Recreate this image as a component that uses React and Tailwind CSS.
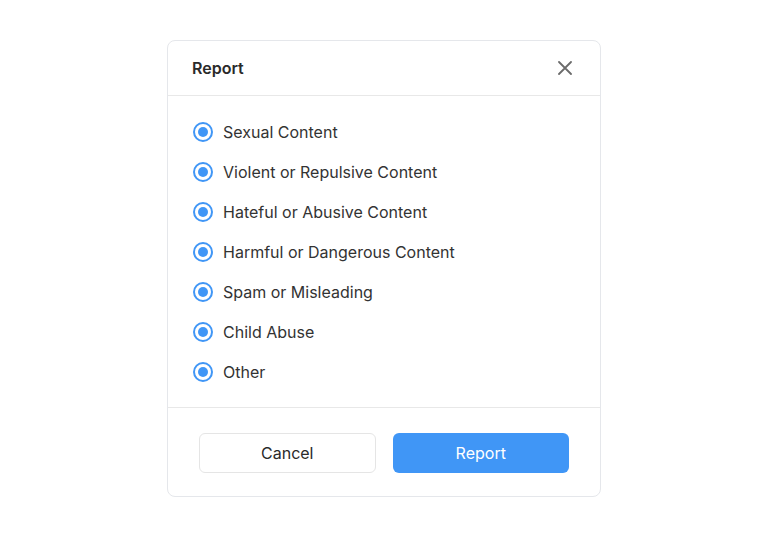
import React from "react";

const options = [
  "Sexual Content",
  "Violent or Repulsive Content",
  "Hateful or Abusive Content",
  "Harmful or Dangerous Content",
  "Spam or Misleading",
  "Child Abuse",
  "Other",
];

export default function App() {
  return (
    <div
      className="min-h-screen w-full bg-white flex items-center justify-center"
      style={{ fontFamily: "Inter, 'Noto Sans', sans-serif" }}
    >
      <div className="w-[434px] rounded-lg border border-[#e5e7eb] bg-white">
        <div className="h-[55px] flex items-center justify-between px-6 border-b border-[#e8e8e8]">
          <span className="text-[16px] font-semibold text-[#2a2a2a]">Report</span>
          <svg width="14" height="14" viewBox="0 0 14 14" className="mr-1">
            <path d="M1 1L13 13M13 1L1 13" stroke="#6b6b6b" strokeWidth="1.8" strokeLinecap="round" />
          </svg>
        </div>
        <div className="pl-[25px] pr-6 pt-4 pb-[15px]">
          {options.map((o) => (
            <label key={o} className="h-10 flex items-center gap-2.5">
              <span className="w-5 h-5 rounded-full border-2 border-[#4096f6] flex items-center justify-center">
                <span className="w-2.5 h-2.5 rounded-full bg-[#4096f6]" />
              </span>
              <span className="text-[16px] text-[#333333]">{o}</span>
            </label>
          ))}
        </div>
        <div className="border-t border-[#e8e8e8] px-[31px] pt-[25px] pb-[23px] grid grid-cols-2 gap-[17px]">
          <button className="h-10 rounded-md border border-[#e5e5e5] bg-white text-[16px] text-[#2a2a2a]">
            Cancel
          </button>
          <button className="h-10 rounded-md bg-[#4096f6] text-[16px] text-white">
            Report
          </button>
        </div>
      </div>
    </div>
  );
}
